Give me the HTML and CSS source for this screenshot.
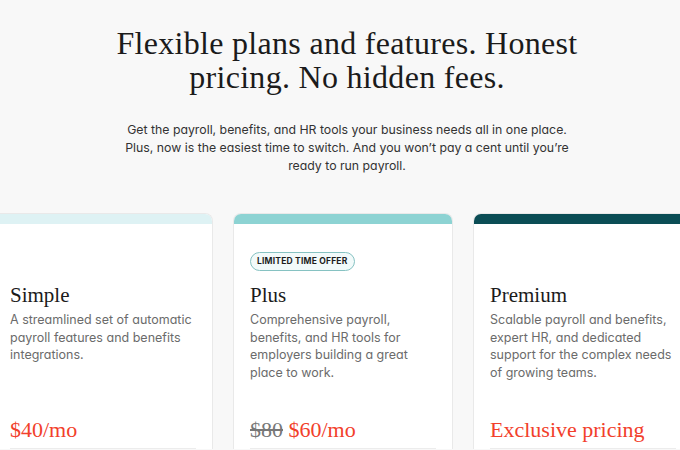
FILE: index.html
```html
<!DOCTYPE html>
<html lang="en">
<head>
<meta charset="utf-8">
<title>Pricing</title>
<link rel="stylesheet" href="styles.css">
</head>
<body>
<header class="hero">
  <h1 class="hero-title">Flexible plans and features. Honest pricing. No hidden fees.</h1>
  <p class="hero-lead">Get the payroll, benefits, and HR tools your business needs all in one place. Plus, now is the easiest time to switch. And you won’t pay a cent until you’re ready to run payroll.</p>
</header>
<section class="plans">
  <article class="card">
    <div class="card-bar bar-simple"></div>
    <div class="card-body">
      <div class="badge-slot"></div>
      <h2 class="card-title">Simple</h2>
      <p class="card-desc">A streamlined set of automatic payroll features and benefits integrations.</p>
      <div class="card-price"><span class="price-now">$40/mo</span></div>
    </div>
  </article>
  <article class="card">
    <div class="card-bar bar-plus"></div>
    <div class="card-body">
      <div class="badge-slot"><span class="badge">LIMITED TIME OFFER</span></div>
      <h2 class="card-title">Plus</h2>
      <p class="card-desc">Comprehensive payroll, benefits, and HR tools for employers building a great place to work.</p>
      <div class="card-price"><s class="price-old">$80</s> <span class="price-now">$60/mo</span></div>
    </div>
  </article>
  <article class="card">
    <div class="card-bar bar-premium"></div>
    <div class="card-body">
      <div class="badge-slot"></div>
      <h2 class="card-title">Premium</h2>
      <p class="card-desc">Scalable payroll and benefits, expert HR, and dedicated support for the complex needs of growing teams.</p>
      <div class="card-price"><span class="price-now">Exclusive pricing</span></div>
    </div>
  </article>
</section>
</body>
</html>
```
FILE: styles.css
```css
html, body {
  margin: 0;
  padding: 0;
}
body {
  background: #f8f8f8;
  font-family: Inter, "Liberation Sans", sans-serif;
  font-feature-settings: "cv11";
  overflow: hidden;
}
.hero {
  padding: 26px 0 0 14px;
  text-align: center;
}
.hero-title {
  margin: 0 auto;
  max-width: 500px;
  font-family: "Liberation Serif", serif;
  font-weight: 400;
  font-size: 32px;
  letter-spacing: 0.3px;
  line-height: 34px;
  color: #1b1b1b;
}
.hero-lead {
  margin: 27px auto 0;
  max-width: 460px;
  font-size: 12.3px;
  line-height: 18px;
  color: #333;
}
.plans {
  display: flex;
  gap: 20px;
  margin: 38px 0 0 -7px;
}
.card {
  box-sizing: border-box;
  flex: 0 0 220px;
  background: #fff;
  border: 1px solid #e9e9e9;
  border-bottom: none;
  border-radius: 8px 8px 0 0;
  overflow: hidden;
}
.card-bar {
  height: 10px;
}
.bar-simple { background: #def2f4; }
.bar-plus { background: #8dd3d3; }
.bar-premium { background: #0b4d55; }
.card-body {
  padding: 28px 16px 0;
}
.badge-slot {
  display: flex;
  align-items: flex-start;
  height: 21px;
}
.badge {
  display: block;
  border: 1px solid #86c2c2;
  border-radius: 10px;
  background: #f2fafa;
  padding: 0 6px;
  font-size: 8.5px;
  font-weight: 700;
  letter-spacing: 0.2px;
  line-height: 17px;
  color: #1d1d1d;
}
.card-title {
  margin: 9px 0 0;
  font-family: "Liberation Serif", serif;
  font-weight: 400;
  font-size: 21px;
  line-height: 26px;
  color: #1b1b1b;
}
.card-desc {
  margin: 3px 0 0;
  min-height: 70px;
  font-size: 12.5px;
  line-height: 17.5px;
  color: #6b6b6b;
}
.card-price {
  margin-top: 35px;
  padding-bottom: 4px;
  border-bottom: 1px solid #ececec;
  font-family: "Liberation Serif", serif;
  font-size: 22px;
  line-height: 28px;
}
.price-now { color: #f2402b; }
.price-old { color: #777; }
```
